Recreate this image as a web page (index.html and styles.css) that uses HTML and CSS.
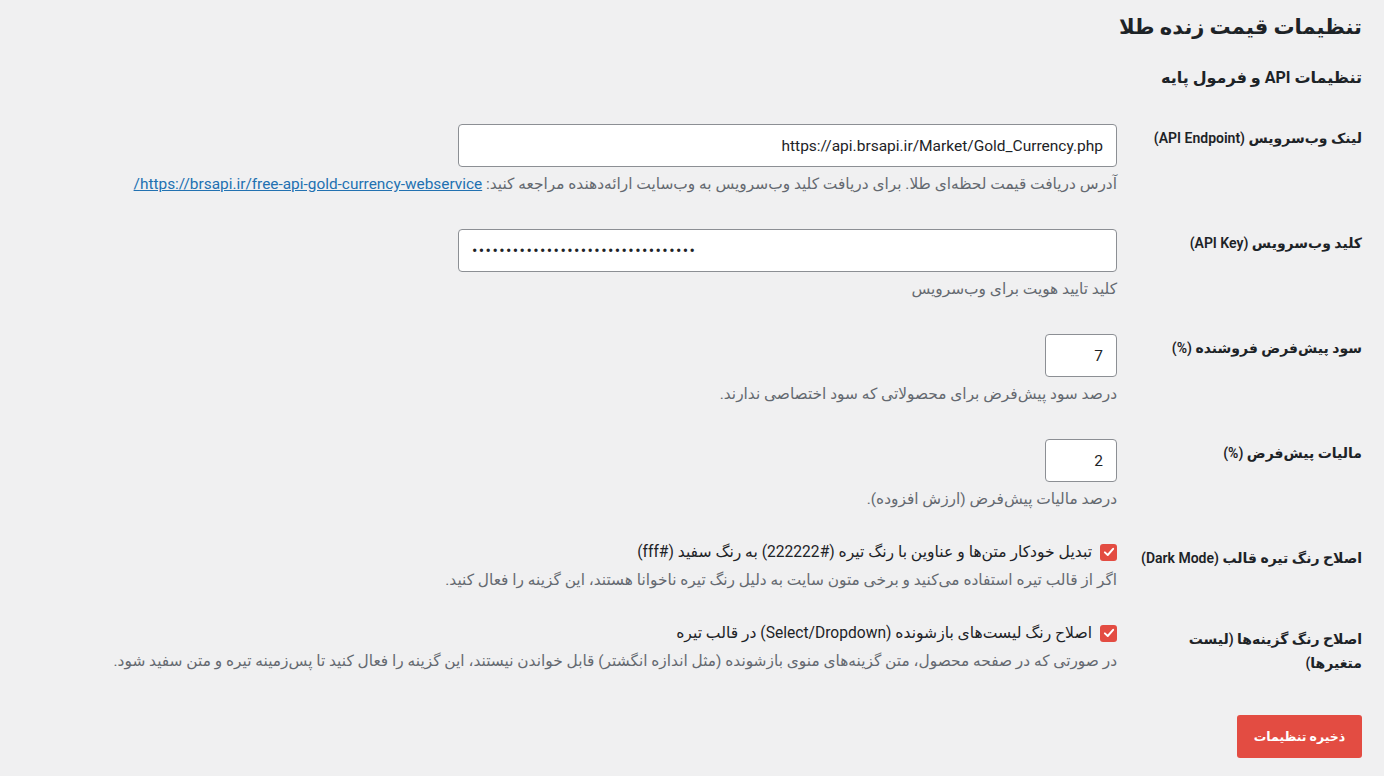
FILE: index.html
```html
<!DOCTYPE html>
<html lang="fa" dir="rtl">
<head>
<meta charset="utf-8">
<title>تنظیمات قیمت زنده طلا</title>
<link rel="stylesheet" href="styles.css">
</head>
<body>
<div class="wrap">
  <h1 class="page-title">تنظیمات قیمت زنده طلا</h1>
  <h2 class="section-title">تنظیمات API و فرمول پایه</h2>
  <form class="form-table">
    <div class="row">
      <label class="th" for="ep">لینک وب‌سرویس (API Endpoint)</label>
      <div class="td">
        <input id="ep" class="field wide url" type="text" value="https://api.brsapi.ir/Market/Gold_Currency.php">
        <p class="desc">آدرس دریافت قیمت لحظه‌ای طلا. برای دریافت کلید وب‌سرویس به وب‌سایت ارائه‌دهنده مراجعه کنید: <a href="#">https://brsapi.ir/free-api-gold-currency-webservice/</a></p>
      </div>
    </div>
    <div class="row">
      <label class="th" for="key">کلید وب‌سرویس (API Key)</label>
      <div class="td">
        <input id="key" class="field wide pass" type="password" value="abcdefghijklmnopqrstuvwxyz1234567">
        <p class="desc">کلید تایید هویت برای وب‌سرویس</p>
      </div>
    </div>
    <div class="row">
      <label class="th" for="profit">سود پیش‌فرض فروشنده (%)</label>
      <div class="td">
        <input id="profit" class="field small" type="number" value="7">
        <p class="desc">درصد سود پیش‌فرض برای محصولاتی که سود اختصاصی ندارند.</p>
      </div>
    </div>
    <div class="row">
      <label class="th" for="tax">مالیات پیش‌فرض (%)</label>
      <div class="td">
        <input id="tax" class="field small" type="number" value="2">
        <p class="desc">درصد مالیات پیش‌فرض (ارزش افزوده).</p>
      </div>
    </div>
    <div class="row check-row">
      <div class="th">اصلاح رنگ تیره قالب (Dark Mode)</div>
      <div class="td">
        <label class="check-line"><span class="checkbox"><svg viewBox="0 0 16 16" width="12" height="12"><path d="M2.5 8.5 L6.3 12 L13.5 3.8" fill="none" stroke="#fff" stroke-width="2.6" stroke-linecap="round" stroke-linejoin="round"/></svg></span><span>تبدیل خودکار متن‌ها و عناوین با رنگ تیره (#222222) به رنگ سفید (#fff)</span></label>
        <p class="desc">اگر از قالب تیره استفاده می‌کنید و برخی متون سایت به دلیل رنگ تیره ناخوانا هستند، این گزینه را فعال کنید.</p>
      </div>
    </div>
    <div class="row check-row">
      <div class="th">اصلاح رنگ گزینه‌ها (لیست متغیرها)</div>
      <div class="td">
        <label class="check-line"><span class="checkbox"><svg viewBox="0 0 16 16" width="12" height="12"><path d="M2.5 8.5 L6.3 12 L13.5 3.8" fill="none" stroke="#fff" stroke-width="2.6" stroke-linecap="round" stroke-linejoin="round"/></svg></span><span>اصلاح رنگ لیست‌های بازشونده (Select/Dropdown) در قالب تیره</span></label>
        <p class="desc">در صورتی که در صفحه محصول، متن گزینه‌های منوی بازشونده (مثل اندازه انگشتر) قابل خواندن نیستند، این گزینه را فعال کنید تا پس‌زمینه تیره و متن سفید شود.</p>
      </div>
    </div>
    <div class="submit">
      <button type="button" class="button-primary">ذخیره تنظیمات</button>
    </div>
  </form>
</div>
</body>
</html>
```
FILE: styles.css
```css
html, body {
  margin: 0;
  padding: 0;
  background: #f0f0f1;
}
body {
  font-family: Roboto, "DejaVu Sans", sans-serif;
  color: #1d2327;
  font-size: 15px;
}
.wrap {
  padding: 12px 22px 0 20px;
}
.page-title {
  margin: 0;
  font-size: 21px;
  line-height: 30px;
  font-weight: 700;
}
.section-title {
  margin: 24px 0 19px;
  font-size: 16px;
  line-height: 24px;
  font-weight: 700;
}
.form-table {
  display: flex;
  flex-direction: column;
}
.row {
  display: flex;
  align-items: flex-start;
}
.th {
  flex: 0 0 222px;
  padding: 17px 0 0 23px;
  font-size: 14px;
  line-height: 24px;
  font-weight: 600;
  color: #1d2327;
}
.td {
  flex: 1;
  padding: 15px 0 18px;
}
.check-row .td {
  padding-top: 11px;
}
.field {
  display: block;
  box-sizing: border-box;
  height: 43px;
  margin: 0;
  padding: 0 13px;
  border: 1px solid #8c8f94;
  border-radius: 4px;
  background: #fff;
  color: #1d2327;
  font-family: Roboto, "DejaVu Sans", sans-serif;
  font-size: 15.5px;
  outline: none;
}
.wide {
  width: 659px;
}
.url {
  text-align: right;
}
.pass {
  direction: ltr;
  text-align: left;
  font-size: 16px;
  letter-spacing: 1.4px;
}
.small {
  width: 72px;
  text-align: right;
  -moz-appearance: textfield;
}
.small::-webkit-inner-spin-button,
.small::-webkit-outer-spin-button {
  -webkit-appearance: none;
  margin: 0;
}
.desc {
  margin: 5px 0 0;
  font-size: 15.4px;
  line-height: 24px;
  color: #646970;
  white-space: nowrap;
}
.check-row .desc {
  margin-top: 4px;
}
.desc a {
  color: #2271b1;
  text-decoration: underline;
}
.check-line {
  display: flex;
  align-items: center;
  gap: 8px;
  font-size: 15.6px;
  line-height: 24px;
  color: #1d2327;
}
.checkbox {
  display: inline-flex;
  align-items: center;
  justify-content: center;
  width: 17px;
  height: 17px;
  border-radius: 3px;
  background: #e34c42;
  flex: 0 0 auto;
}
.submit {
  padding: 24px 0 0;
}
.button-primary {
  display: block;
  width: 125px;
  height: 43px;
  border: 0;
  border-radius: 3px;
  background: #e34c42;
  color: #fff;
  font-family: Roboto, "DejaVu Sans", sans-serif;
  font-size: 12.5px;
  font-weight: 700;
  cursor: pointer;
}
```
